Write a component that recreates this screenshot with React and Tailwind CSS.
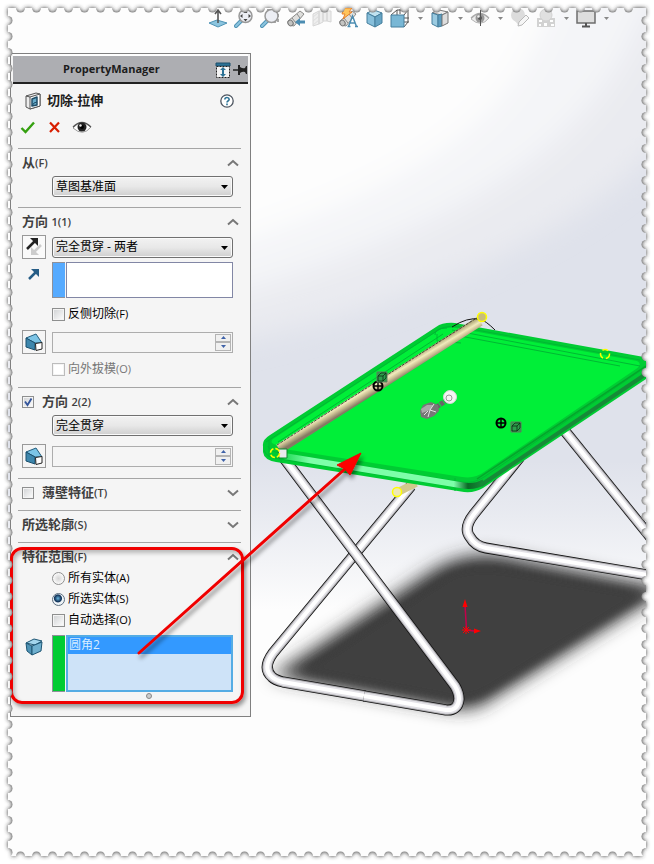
import { useState } from "react";

const font = "font-['Open_Sans','Noto_Sans_CJK_SC',sans-serif]";

/* ---------- View toolbar ---------- */

const viewTools = [
  { name: "Normal To", icon: <NormalToIcon /> },
  { name: "Zoom to Fit", icon: <ZoomIcon fit /> },
  { name: "Zoom to Area", icon: <ZoomIcon /> },
  { name: "Previous View", icon: <ScopeIcon back /> },
  { name: "Section View", icon: <SectionIcon /> },
  { name: "Dynamic Annotation Views", icon: <ScopeIcon /> },
  { name: "View Orientation", icon: <CubeIcon /> },
  { name: "Standard Views", icon: <WireCubeIcon />, menu: true },
  { name: "Display Style", icon: <DisplayIcon />, menu: true },
  { name: "Hide/Show Items", icon: <EyeIcon split />, menu: true },
  { name: "Edit Appearance", icon: <AppearanceIcon /> },
  { name: "Apply Scene", icon: <SceneIcon />, menu: true },
  { name: "View Settings", icon: <MonitorIcon />, menu: true },
];

function NormalToIcon() {
  return (
    <svg width="20" height="20" viewBox="0 0 20 20">
      <path d="M1 15l8-3 10 3-9 4z" fill="#8cc5df" stroke="#4f93b5" />
      <path d="M10 15V3M7 6l3-4 3 4" fill="none" stroke="#555" strokeWidth="1.6" />
    </svg>
  );
}

function ZoomIcon({ fit }) {
  return (
    <svg width="20" height="20" viewBox="0 0 20 20">
      {!fit && <path d="M7 2h11v12H13" fill="none" stroke="#555" strokeDasharray="3 2" />}
      <path d="M2 18l6-6" stroke="#4f93b5" strokeWidth="4" strokeLinecap="round" />
      <path d="M2 18l6-6" stroke="#8cc5df" strokeWidth="2" strokeLinecap="round" />
      <circle cx="11.500" cy="8" r="6.500" fill="#eceef4" stroke="#999" strokeWidth="1.500" />
      {fit && <path d="M11.500 2.500l2 2.500h-4zM11.500 13.500l2-2.500h-4zM6 8l2.500-2v4zM17 8l-2.500-2v4z" fill="#444" />}
    </svg>
  );
}

function ScopeIcon({ back }) {
  return (
    <svg width="20" height="20" viewBox="0 0 20 20">
      <path d="M2 13L14 3l4 3L8 18l-5-1z" fill="#dededc" stroke="#8a8a88" />
      <path d="M6 10l4 5M11 6l3 4" stroke="#8a8a88" />
      <ellipse cx="4.500" cy="15" rx="2.500" ry="3" fill="#c4c4c2" stroke="#777" transform="rotate(-35 4.500 15)" />
      {back ? (
        <path d="M9 14l5-4v2.500h5v3h-5V18z" fill="#4c8db2" />
      ) : (
        <>
          <path d="M6 0h8l-3 4h3L5 11l2-5H4z" fill="#ffc45b" stroke="#e7812c" />
          <path d="M10.500 18.500l4-10.500 4 10.500M12 15h5M9.500 18.500h3M17 18.500h3" fill="none" stroke="#4c8db2" strokeWidth="1.500" />
        </>
      )}
    </svg>
  );
}

function SectionIcon() {
  return (
    <svg width="20" height="20" viewBox="0 0 20 20" fill="#eee" stroke="#d6d6d6">
      <path d="M1 6l6-3v13l-6 2zM7 3h4v11l-4 2zM11 4h4v9h-4zM15 3h4v11l-4-1z" />
      <path d="M1 9l5-4M1 13l6-5M1 17l6-5" stroke="#ddd" />
    </svg>
  );
}

function CubeIcon() {
  return (
    <svg width="20" height="20" viewBox="0 0 20 20" stroke="#467f9d" strokeLinejoin="round">
      <path d="M3 5l7-3 8 3-7 4z" fill="#c0e2f0" />
      <path d="M3 5l8 4v10l-8-4z" fill="#87bfdb" />
      <path d="M11 9l7-4v10l-7 4z" fill="#67a5c5" />
    </svg>
  );
}

function WireCubeIcon() {
  return (
    <svg width="20" height="20" viewBox="0 0 20 20">
      <path d="M1 7l6-5h11v12l-4 5M14 7l4-5M7 2v5M14 14h5M10 1v5M14 10h5" fill="none" stroke="#555" />
      <path d="M1 7h13v12H1z" fill="#79b7d5" stroke="#467f9d" />
    </svg>
  );
}

function DisplayIcon() {
  return (
    <svg width="20" height="20" viewBox="0 0 20 20" strokeLinejoin="round">
      <path d="M2 5l7-3 9 2-6 3z" fill="#eee" stroke="#777" />
      <path d="M2 5l6 2v12l-6-3z" fill="#9bcbe1" stroke="#467f9d" />
      <path d="M8 7l4-1v12l-4 1z" fill="#5d9dbf" stroke="#467f9d" />
      <path d="M12 7l6-3v11l-6 3z" fill="#ddd" stroke="#777" />
    </svg>
  );
}

function EyeIcon({ split }) {
  return (
    <svg width="20" height="20" viewBox="0 0 20 20">
      <path d="M1 11q8-10 18-1-8 10-18 1z" fill={split ? "#ececec" : "#fff"} stroke={split ? "#b5b5b5" : "#999"} />
      <path d="M1 10q9-9 18 0" fill="none" stroke={split ? "#aaa" : "#555"} strokeWidth="1.300" />
      <circle cx="10" cy="10" r="4.500" fill={split ? "#999" : "#222"} />
      <circle cx="10" cy="10" r="2" fill={split ? "#555" : "#000"} />
      <circle cx="8.500" cy="8.500" r="1.200" fill="#eee" />
      {split && <path d="M10.500 2v16" stroke="#555" />}
    </svg>
  );
}

function AppearanceIcon() {
  return (
    <svg width="20" height="20" viewBox="0 0 20 20">
      <circle cx="8" cy="7" r="7" fill="#dcdcdc" />
      <path d="M2 9l7 9 4-7z" fill="#dcdcdc" />
      <path d="M8 18l1-4 7-7 3 3-7 7z" fill="#f6f6f6" stroke="#b9b9b9" />
    </svg>
  );
}

function SceneIcon() {
  return (
    <svg width="20" height="20" viewBox="0 0 20 20">
      <path d="M1 10h18v9H1z" fill="#d2d2d2" />
      <path d="M3 12h3v2H3zM8 15h3v3H8zM14 12h3v2h-3zM3 16h2v2H3zM15 16h3v2h-3z" fill="#fff" />
      <circle cx="10" cy="7" r="6" fill="#e0e0e0" stroke="#d2d2d2" />
    </svg>
  );
}

function MonitorIcon() {
  return (
    <svg width="20" height="20" viewBox="0 0 20 20">
      <path d="M1 3h18v12H1z" fill="#dedede" stroke="#6d6d6d" strokeWidth="1.500" />
      <path d="M10 15v3M6 18.500h8" stroke="#555" strokeWidth="2" />
    </svg>
  );
}

function ViewToolbar() {
  return (
    <header className="relative flex pl-[205px] pt-2">
      {viewTools.map((tool) => (
        <div key={tool.name} className="flex shrink-0">
          <button aria-label={tool.name} className="flex w-[26px] justify-center">
            {tool.icon}
          </button>
          {tool.menu && (
            <button aria-label={`${tool.name} menu`} className="flex w-[14px] items-center justify-center">
              <svg width="5" height="3" viewBox="0 0 5 3">
                <path d="M0 0h5L2.500 3z" fill="#888" />
              </svg>
            </button>
          )}
        </div>
      ))}
    </header>
  );
}

/* ---------- Panel icons ---------- */

function Chevron({ open }) {
  return (
    <svg width="12" height="8" viewBox="0 0 12 8" fill="none" stroke="#777" strokeWidth="2">
      <path d={open ? "M1 6.500l5-4.500 5 4.500" : "M1 1.500L6 6l5-4.500"} />
    </svg>
  );
}

function DraftIcon() {
  return (
    <svg width="20" height="20" viewBox="0 0 20 20" strokeLinejoin="round">
      <path d="M2 6l10-4 6 9h-7z" fill="#7cc4e6" stroke="#245d7d" />
      <path d="M2 6l9 5v7l-9-3z" fill="#3d86ac" stroke="#1b4f6c" />
      <path d="M11.500 11.500l6.500-1v6.500l-6 1.500z" fill="#fff" stroke="#222" />
    </svg>
  );
}

function BodyIcon() {
  return (
    <svg width="18" height="18" viewBox="0 0 18 18" stroke="#1d5573" strokeLinejoin="round">
      <path d="M1 5l8-4 8 2-7 4z" fill="#a3d5ec" />
      <path d="M1 5l6 3v9l-5-4z" fill="#4f93b5" />
      <path d="M7 8l10-4-1 9-9 4z" fill="#6fb0cf" />
    </svg>
  );
}

/* ---------- Panel controls ---------- */

function Section({ title, mark, open = true, checked, onCheck, children }) {
  return (
    <section className="relative border-t border-[#a5a5a5]">
      <h2 className="flex h-[27px] items-center pl-1 pr-[2px] text-[13px] font-bold text-[#404040]">
        {onCheck && (
          <span className="mr-2 flex">
            <Tick small label={title} checked={checked} onChange={onCheck} />
          </span>
        )}
        <span className="flex-1">
          {title}
          <span className="text-[11px] font-semibold">{mark}</span>
        </span>
        <button aria-label={open ? "Collapse" : "Expand"}>
          <Chevron open={open} />
        </button>
      </h2>
      {children}
    </section>
  );
}

function Tick({ checked, onChange, disabled, label, small, id }) {
  return (
    <span className="relative flex">
      <input
        id={id}
        type="checkbox"
        aria-label={label}
        checked={checked}
        disabled={disabled}
        onChange={onChange}
        className={`${small ? "h-3 w-3" : "h-[13px] w-[13px]"} appearance-none border border-[#8e8f8f] bg-gradient-to-br from-[#cfd1d3] to-white shadow-[inset_0_0_0_1px_#f4f4f4] disabled:border-[#bcbcbc] disabled:from-white`}
      />
      {checked && (
        <svg className="pointer-events-none absolute inset-0" width="12" height="12" viewBox="0 0 12 12">
          <path d="M3 5.500l2.500 3.500L9.500 2.500" fill="none" stroke="#34559b" strokeWidth="1.800" />
        </svg>
      )}
    </span>
  );
}

function CheckRow({ id, text, mark, disabled, className }) {
  const [on, setOn] = useState(false);
  return (
    <div className={`flex h-4 items-center gap-[3px] pl-[34px] text-[12px] ${className}`}>
      <Tick id={id} checked={on} disabled={disabled} onChange={() => setOn(!on)} />
      <label htmlFor={id} className={disabled ? "text-[#777]" : "text-black"}>
        {text}
        <span className="text-[11px]">{mark}</span>
      </label>
    </div>
  );
}

function RadioRow({ id, text, mark, checked, onChange, className }) {
  return (
    <div className={`flex h-4 items-center gap-[3px] pl-[34px] text-[12px] text-black ${className}`}>
      <input
        id={id}
        type="radio"
        name="scope"
        checked={checked}
        onChange={onChange}
        className="h-[13px] w-[13px] appearance-none rounded-full border border-[#8e8f8f] bg-[radial-gradient(circle,#d5d5d5_0,#fafafa_70%)] checked:border-[#5d6f80] checked:bg-[radial-gradient(circle_at_45%_40%,#68b7e0_0,#16395f_35%,#16395f_40%,#eef3f7_50%)]"
      />
      <label htmlFor={id}>
        {text}
        <span className="text-[11px]">{mark}</span>
      </label>
    </div>
  );
}

function Combo({ label, options }) {
  return (
    <div className="relative flex-1">
      <select
        aria-label={label}
        className="block h-[21px] w-full appearance-none rounded-[3px] border border-[#707070] bg-gradient-to-b from-[#f2f2f2] via-[#e8e8e8] to-[#cfcfcf] pl-[3px] text-[12px] leading-[18px] text-black shadow-[inset_0_0_0_1px_#fafafa]"
      >
        {options.map((o) => (
          <option key={o}>{o}</option>
        ))}
      </select>
      <svg className="pointer-events-none absolute right-[5px] top-[9px]" width="7" height="4" viewBox="0 0 7 4">
        <path d="M0 0h7L3.500 4z" />
      </svg>
    </div>
  );
}

function DraftRow({ label }) {
  return (
    <div className="flex items-center gap-[6px] pl-1 pr-2">
      <button aria-label="Draft On/Off" className="flex h-6 w-6 items-center justify-center border border-[#999] bg-[#f5f5f5]">
        <DraftIcon />
      </button>
      <div className="flex h-[21px] flex-1 border border-[#adadad]">
        <input aria-label={label} disabled className="w-full min-w-0 flex-1 bg-transparent px-1 text-[12px]" />
        <div className="flex w-[18px] flex-col p-px">
          <button aria-label="Increase" className="flex flex-1 items-center justify-center border border-[#b4b4b4] bg-[#f0f0f0]">
            <svg width="5" height="3" viewBox="0 0 5 3">
              <path d="M0 3h5L2.500 0z" fill="#3f62a8" />
            </svg>
          </button>
          <button aria-label="Decrease" className="flex flex-1 items-center justify-center border border-[#b4b4b4] bg-[#f0f0f0]">
            <svg width="5" height="3" viewBox="0 0 5 3">
              <path d="M0 0h5L2.500 3z" fill="#3f62a8" />
            </svg>
          </button>
        </div>
      </div>
    </div>
  );
}

/* ---------- PropertyManager ---------- */

function PropertyManager() {
  const [second, setSecond] = useState(true);
  const [thin, setThin] = useState(false);
  const [scope, setScope] = useState("selected");

  return (
    <aside className="relative ml-[10px] mt-[25px] w-[241px] border border-[#808080] bg-[#f5f5f5] pb-[17px]">
      <div className="mx-[2px] flex h-[30px] items-center border-b-2 border-t-2 border-b-[#222] border-t-white bg-[#adaeb2] pt-px">
        <h1 className="flex-1 pl-[50px] text-[11px] font-bold text-[#1c1c1c]">PropertyManager</h1>
        <button aria-label="Resize panel">
          <svg width="16" height="16" viewBox="0 0 16 16">
            <path d="M1 1h14v3H1z" fill="#2d7396" stroke="#1c4f6a" />
            <path d="M1.500 4.500h13v11h-13z" fill="#f4f4f4" stroke="#222" strokeDasharray="2 1" />
            <path d="M8 5l3 3H9v4h2l-3 3-3-3h2V8H5z" fill="#2d7396" />
          </svg>
        </button>
        <button aria-label="Pin panel" className="ml-[2px]">
          <svg width="15" height="12" viewBox="0 0 15 12">
            <path d="M0 6h6" stroke="#222" strokeWidth="1.500" />
            <path d="M5 1h2v2q3 2 5 1l1-2h1v8h-1l-1-2q-2-1-5 1v2H5z" fill="#222" />
          </svg>
        </button>
      </div>

      <div className="flex h-[31px] items-center pl-[13px] pr-4 pt-[2px]">
        <svg width="18" height="18" viewBox="0 0 18 18" strokeLinejoin="round">
          <path d="M2 4l10-3 4 1v12l-10 3-4-2z" fill="#ededed" stroke="#555" />
          <path d="M6 5l10-3v12l-10 3zM2 4l4 1" fill="#fff" stroke="#555" />
          <path d="M8 7l5-2v8l-5 1z" fill="#67abc9" stroke="#204e68" strokeWidth="1.500" />
          <path d="M8 14l2-3 3-1" fill="none" stroke="#204e68" />
        </svg>
        <h2 className="flex-1 pl-[5px] text-[13px] font-bold text-[#1c1c1c]">切除-拉伸</h2>
        <button aria-label="Help">
          <svg width="14" height="14" viewBox="0 0 14 14">
            <circle cx="7" cy="7" r="6.200" fill="#fff" stroke="#4d5560" strokeWidth="1.300" />
            <path d="M4.800 5.500q.2-2 2.200-2t2.200 1.800q0 1-1.200 1.700-1 .6-1 1.600M7 9.600v1.600" fill="none" stroke="#2d7396" strokeWidth="1.600" />
          </svg>
        </button>
      </div>

      <div className="flex h-[33px] items-start gap-[11px] pl-[9px] pt-1">
        <button aria-label="OK">
          <svg width="16" height="16" viewBox="0 0 16 16">
            <path d="M1.500 9l4 4L14 3.500" fill="none" stroke="#35a010" strokeWidth="2.400" />
          </svg>
        </button>
        <button aria-label="Cancel">
          <svg width="14" height="16" viewBox="0 0 14 16">
            <path d="M3 3.500l9 9.500M12 3.500L3 13" stroke="#d81e00" strokeWidth="2.200" />
          </svg>
        </button>
        <button aria-label="Preview" className="-mt-[2px]">
          <EyeIcon />
        </button>
      </div>

      <div className="ml-[7px] mr-[9px]">
        <Section title="从" mark="(F)">
          <div className="flex pb-[10px] pl-[34px] pr-2">
            <Combo label="从" options={["草图基准面"]} />
          </div>
        </Section>

        <Section title="方向 " mark="1(1)">
          <div className="flex items-center gap-[6px] pl-1 pr-2">
            <button aria-label="Reverse direction" className="h-6 w-6 border border-[#999] bg-[#fafafa]">
              <svg width="22" height="22" viewBox="0 0 22 22">
                <path d="M4 13l8-8" stroke="#222" strokeWidth="2.500" />
                <path d="M7 2h8v8z" fill="#222" />
                <path d="M18 9l-7 7" stroke="#ccc" strokeWidth="2.500" />
                <path d="M8 11v8h8z" fill="#ccc" />
              </svg>
            </button>
            <Combo label="方向 1" options={["完全贯穿 - 两者"]} />
          </div>
          <div className="mt-[3px] flex pl-[9px] pr-2">
            <svg className="mt-[6px]" width="14" height="12" viewBox="0 0 14 12">
              <path d="M2 11l7-7" stroke="#265d86" strokeWidth="2.500" />
              <path d="M4 1h8v8z" fill="#265d86" />
            </svg>
            <div className="ml-[11px] w-[13px] border-y border-l border-[#8e9099] bg-[#55aaff]" />
            <div className="ml-px h-9 flex-1 border border-[#8287a5] bg-white" />
          </div>
          <CheckRow id="flip" text="反侧切除" mark="(F)" className="mt-2" />
          <div className="mt-2">
            <DraftRow label="拔模角度 1" />
          </div>
          <CheckRow id="outward" text="向外拔模" mark="(O)" disabled className="mb-[10px] mt-[7px]" />
        </Section>

        <Section title="方向 " mark="2(2)" checked={second} onCheck={() => setSecond(!second)}>
          <div className="flex pb-2 pl-[34px] pr-2">
            <Combo label="方向 2" options={["完全贯穿"]} />
          </div>
          <div className="pb-[10px]">
            <DraftRow label="拔模角度 2" />
          </div>
        </Section>

        <Section title="薄壁特征" mark="(T)" open={false} checked={thin} onCheck={() => setThin(!thin)}>
          <div className="h-1" />
        </Section>

        <Section title="所选轮廓" mark="(S)" open={false}>
          <div className="h-1" />
        </Section>

        <Section title="特征范围" mark="(F)">
          <RadioRow id="all" text="所有实体" mark="(A)" checked={scope === "all"} onChange={() => setScope("all")} />
          <RadioRow
            id="selected"
            text="所选实体"
            mark="(S)"
            checked={scope === "selected"}
            onChange={() => setScope("selected")}
            className="mt-[5px]"
          />
          <CheckRow id="auto" text="自动选择" mark="(O)" className="mt-[5px]" />
          <div className="mt-[7px] flex pl-[7px] pr-2">
            <span className="mt-[3px]">
              <BodyIcon />
            </span>
            <div className="ml-[9px] w-[13px] border-y border-l border-[#8e9099] bg-[#00cc33]" />
            <ul aria-label="实体" className="ml-px h-[57px] flex-1 border-2 border-[#54ace4] bg-[#cee3f8]">
              <li className="h-[17px] bg-[#3399ff] pl-px text-[12px] leading-[15px] text-[#d8ecff]">圆角2</li>
            </ul>
          </div>
          <div className="ml-[128px] mt-px h-[6px] w-[6px] rounded-full border border-[#888] bg-[#ccc]" />
          {/* callout round the feature scope group */}
          <div className="pointer-events-none absolute -bottom-[5px] -left-[8px] -right-[3px] top-[4px] rounded-[12px] border-[3px] border-[#f00000] shadow-[2px_3px_4px_rgba(0,0,0,0.4),inset_2px_3px_4px_rgba(0,0,0,0.25)]" />
        </Section>
      </div>
    </aside>
  );
}

/* ---------- Model view ---------- */

function Tube({ d }) {
  return (
    <g fill="none" strokeLinejoin="round">
      <path d={d} stroke="#111" strokeWidth="11" />
      <path d={d} stroke="#aaa9ad" strokeWidth="9.400" />
      <path d={d} stroke="#e2e1e6" strokeWidth="7.400" />
      <path d={d} stroke="#fff" strokeWidth="4" />
    </g>
  );
}

function MassMark({ x, y, bx, by }) {
  return (
    <g fill="none">
      <circle cx={x} cy={y} r="4.500" stroke="#000" strokeWidth="2" />
      <path d={`M${x - 5} ${y}h10M${x} ${y - 5}v10`} stroke="#000" strokeWidth="1.400" />
      <g transform={`translate(${bx} ${by})`}>
        <path d="M-5-5H5V5H-5z" fill="#2c9e4a" stroke="#5f7a5f" />
        <path d="M-4-1l3-3h5l-3 3zM-4-1v5h5v-5M1 4l3-3v-5" stroke="#0c2a14" strokeWidth=".8" />
      </g>
    </g>
  );
}

function ModelView() {
  return (
    <svg className="absolute inset-0 h-full w-full" aria-hidden="true">
      <defs>
        <filter id="haze" x="-10%" y="-10%" width="120%" height="120%">
          <feGaussianBlur stdDeviation="14" />
        </filter>
        <filter id="soft" x="-10%" y="-10%" width="120%" height="120%">
          <feGaussianBlur stdDeviation="5" />
        </filter>
        <filter id="shadow" x="-20%" y="-30%" width="140%" height="160%">
          <feGaussianBlur stdDeviation="9" />
        </filter>
        <linearGradient id="fade" gradientUnits="userSpaceOnUse" x1="0" y1="460" x2="0" y2="610">
          <stop offset="0" stopColor="#fdfdfd" stopOpacity="0" />
          <stop offset=".35" stopColor="#fdfdfd" stopOpacity=".3" />
          <stop offset="1" stopColor="#fdfdfd" />
        </linearGradient>
        <linearGradient id="rod" gradientUnits="userSpaceOnUse" x1="377" y1="379" x2="383" y2="389">
          <stop offset="0" stopColor="#b5ae7d" />
          <stop offset=".35" stopColor="#f1ebbc" />
          <stop offset=".6" stopColor="#cfc497" />
          <stop offset="1" stopColor="#857a63" />
        </linearGradient>
        <linearGradient id="front" gradientUnits="userSpaceOnUse" x1="280" y1="0" x2="482" y2="0">
          <stop offset="0" stopColor="#10d548" />
          <stop offset=".15" stopColor="#7dffa9" />
          <stop offset=".86" stopColor="#7dffa9" />
          <stop offset=".93" stopColor="#0a6a25" />
          <stop offset="1" stopColor="#178a38" />
        </linearGradient>
      </defs>

      {/* backdrop */}
      <rect width="100%" height="100%" fill="#dfe2eb" />
      <g filter="url(#haze)">
        <path d="M-60-60H900V-20L654 150Q560 250 330 320L-60 410z" fill="#eaebf0" />
        <path d="M-60-60H690L642 20C590 150 460 225 250 290L-60 360z" fill="#f4f5f8" />
        <path d="M-60-60H590L545 20C510 120 420 180 250 238L-60 320z" fill="#fdfdfd" />
      </g>
      <rect y="460" width="100%" height="100%" fill="url(#fade)" />

      {/* floor shadow */}
      <path
        d="M272 676L430 572Q470 546 520 560L670 589 660 594 492 698Q476 712 450 708z"
        fill="#333"
        filter="url(#shadow)"
      />
      <path d="M300 672L450 573Q475 562 520 571L648 594 490 692Q474 702 450 701z" fill="#404040" filter="url(#soft)" />

      {/* rear frame */}
      <Tube d="M520 457L474 514Q463 528 470 537Q475 546 486 548L660 577" />
      <Tube d="M560 425L660 549" />

      {/* front frame */}
      <Tube d="M411 486L273 653Q262 668 272 677Q275 680 283 682L365 696" />
      <Tube d="M364 696L446 710Q458 711 459 699Q459 693 455 686L283 457" />
      <path d="M398 492L416 483" stroke="#d3c98d" strokeWidth="8" />

      {/* table top */}
      <path
        d="M263 446Q262 440 270 435L436 327Q443 322 455 323L644 357Q652 361 646 379L483 488Q475 493 464 492L276 462Q264 460 263 452z"
        fill="#00cc33"
      />
      <path
        d="M272 443Q270 440 276 437L439 330Q445 327 456 328L637 361Q643 364 636 369L484 472Q475 479 462 477L284 449z"
        fill="#00ef38"
      />
      <g fill="none" stroke="#00b834">
        <path d="M266 442L440 329Q448 325 460 327L640 360M278 442L443 334 M435 335Q434 328 447 328M437 334v7l24 2M452 330L640 366M460 336L620 366" />
        <path d="M268 446Q269 451 280 453L460 482Q474 484 484 477L640 371M264 450Q266 458 280 459L462 488Q476 490 485 483" />
        <path d="M269 440v17M281 447v15M455 478v13" />
      </g>
      <path d="M284 456L460 485Q474 488 484 482" fill="none" stroke="url(#front)" strokeWidth="6" />
      <path d="M481 485L646 374" stroke="#168a38" strokeWidth="4" />
      <path d="M477 479L646 366" stroke="#05a52c" strokeWidth="1.500" />

      {/* rod seen through the top */}
      <path d="M279 449L480 321" stroke="url(#rod)" strokeWidth="10" />
      <path d="M277 445L475 319" stroke="#222" strokeDasharray="3 1" strokeWidth=".8" />
      <path d="M452 327Q467 317 480 319Q486 321 495 330" fill="none" stroke="#111" />
      <path d="M278 449h9v9h-8z" fill="#e9e9ec" stroke="#0a8a2c" />

      <g fill="none" stroke="#ffff00" strokeWidth="1.500">
        <circle cx="482" cy="317" r="4.500" fill="#c8bd7c" />
        <circle cx="397" cy="492" r="4.500" fill="#eee8b5" />
        <circle cx="605" cy="354" r="4.500" strokeDasharray="6 3" />
        <circle cx="275" cy="453" r="4.500" strokeDasharray="5 2" />
      </g>

      <MassMark x={378} y={386} bx={382} by={377} />
      <MassMark x={501} y={423} bx={516} by={427} />

      {/* drag handle */}
      <path d="M432 410L447 400" stroke="#666" strokeWidth="5" strokeDasharray="4 1" />
      <path d="M420 411l3-6 8-3 7 3 1 6-5 5-7 3-6-2z" fill="#777" />
      <path d="M421 409l6-4 6 0-3 5-8 3" fill="#aaa" />
      <path d="M430 410l4-6M430 410l-2 7M430 410l6 2M424 415l4-4" fill="none" stroke="#e5e5e5" />
      <circle cx="450" cy="397" r="6.500" fill="#f4f4f4" stroke="#d5d5d5" />
      <circle cx="449" cy="398" r="3" fill="none" stroke="#999" />

      {/* origin */}
      <g stroke="#ff0000" fill="#ff0000">
        <path d="M466.500 629L465 605M466 630l8 1" stroke="#c4004a" strokeWidth="1.500" />
        <path d="M465 599l2.500 8h-5zM481 631l-7-2.500v5z" stroke="none" />
        <path d="M463 627l6 6M469 627l-6 6M462 630h9M466 626v8" />
      </g>
    </svg>
  );
}

function CalloutArrow() {
  return (
    <svg className="pointer-events-none absolute inset-0 h-full w-full" aria-hidden="true">
      <defs>
        <filter id="drop" x="-10%" y="-10%" width="120%" height="120%">
          <feDropShadow dx="2" dy="4" stdDeviation="2" floodOpacity=".45" />
        </filter>
      </defs>
      <g filter="url(#drop)">
        <path d="M139 653L346 468" stroke="#f00000" strokeWidth="3" strokeLinecap="round" />
        <path d="M361 453L350 475 345 469 337 465z" fill="#ff0000" stroke="#f00000" />
      </g>
    </svg>
  );
}

/* ---------- Perforated edge ---------- */

const holes = [];
for (let x = 20.5; x < 640; x += 16) {
  holes.push([x, 8], [x, 856]);
}
for (let y = 20.5; y < 854; y += 16) {
  holes.push([8, y], [646, y]);
}

function Holes({ fill }) {
  return holes.map(([x, y]) => <circle key={`${x}-${y}`} cx={x} cy={y} r="4.500" fill={fill} />);
}

function StampEdge() {
  return (
    <svg
      className="pointer-events-none absolute inset-0 h-full w-full"
      viewBox="0 0 654 864"
      preserveAspectRatio="none"
      aria-hidden="true"
    >
      <defs>
        <filter id="edge" x="-5%" y="-5%" width="110%" height="110%">
          <feGaussianBlur stdDeviation="2" />
        </filter>
        <mask id="outside" maskUnits="userSpaceOnUse" x="0" y="0" width="654" height="864">
          <rect width="654" height="864" fill="#fff" />
          <rect x="8" y="8" width="638" height="848" fill="#000" />
          <Holes fill="#fff" />
        </mask>
        <mask id="paper" maskUnits="userSpaceOnUse" x="0" y="0" width="654" height="864">
          <rect x="8" y="8" width="638" height="848" fill="#fff" />
          <Holes fill="#000" />
        </mask>
      </defs>
      <g mask="url(#outside)">
        <rect width="654" height="864" fill="#fff" />
        <g filter="url(#edge)">
          <rect width="654" height="864" fill="#333" mask="url(#paper)" />
        </g>
      </g>
    </svg>
  );
}

export default function App() {
  return (
    <main className={`relative min-h-screen overflow-hidden bg-[#fdfdfd] ${font}`}>
      <ModelView />
      <ViewToolbar />
      <PropertyManager />
      <CalloutArrow />
      <StampEdge />
    </main>
  );
}
